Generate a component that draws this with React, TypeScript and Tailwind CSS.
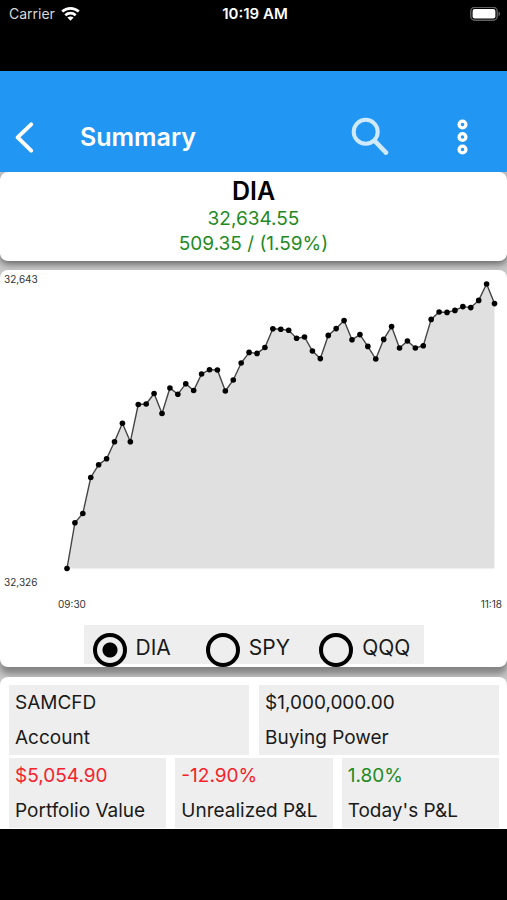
import React, { useState } from 'react';

const symbols = ['DIA', 'SPY', 'QQQ'];

const topTiles = [
  { value: 'SAMCFD', label: 'Account', color: 'text-[#1a1a1a]' },
  { value: '$1,000,000.00', label: 'Buying Power', color: 'text-[#1a1a1a]' },
];

const bottomTiles = [
  { value: '$5,054.90', label: 'Portfolio Value', color: 'text-[#f5222a]' },
  { value: '-12.90%', label: 'Unrealized P&L', color: 'text-[#f5222a]' },
  { value: '1.80%', label: "Today's P&L", color: 'text-[#1f8a24]' },
];

// heights of the price points inside the plot, measured from its top edge
const prices = [
  288.5, 242.7, 233.5, 197.5, 184.7, 178.8, 161.8, 143.3, 161.8, 124.5, 124, 113.5, 133.5, 108, 114.3,
  103.7, 110.5, 94, 89.7, 90, 111, 100, 83, 72.4, 73.4, 67.5, 48.8, 49.3, 50.3, 58.3, 57, 71, 78.6, 55.4,
  48.6, 40.6, 59.7, 54.6, 66.4, 79, 59.4, 46.6, 68, 61, 68, 65.7, 39.4, 32, 32.4, 30.4, 26.6, 27.6, 20.4,
  4, 23.6,
];

const points = prices.map((y, i) => ({ x: 7 + i * 7.917, y }));
const line = points.map((p) => `${p.x},${p.y}`).join(' ');

const StatusBar: React.FC = () => (
  <div className="grid grid-cols-3 items-center h-[71px] pb-[43px] pl-[9px] pr-[6px] text-white text-sm leading-5">
    <div className="flex items-center gap-[6px] text-[#d8d8d8]">
      <span>Carrier</span>
      <svg width="19" height="15" viewBox="0 0 19 15" aria-hidden="true">
        <g fill="none" stroke="#fff" strokeWidth="2.7">
          <path d="M1.2 4.6C6 0.3 13 0.3 17.8 4.6" />
          <path d="M4.3 8.3C7.3 5.5 11.7 5.5 14.7 8.3" />
        </g>
        <path d="M9.5 13.8L6.4 10.6C8.2 9 10.8 9 12.6 10.6Z" fill="#fff" />
      </svg>
    </div>
    <span className="text-center text-[15px] font-semibold whitespace-nowrap">10:19 AM</span>
    <svg className="justify-self-end" width="31" height="15" viewBox="0 0 31 15" aria-hidden="true">
      <rect x="0.8" y="0.3" width="26.4" height="13" rx="4" fill="none" stroke="#636363" strokeWidth="1.4" />
      <rect x="2.6" y="2.1" width="22.8" height="9.4" rx="2" fill="#fff" />
      <path d="M28.6 4.5C30.4 5.3 30.4 8.5 28.6 9.3Z" fill="#777" />
    </svg>
  </div>
);

const Header: React.FC = () => (
  <header className="flex items-end h-[101px] pb-[14px] pl-3 pr-[32px] bg-[#2196f3] text-white">
    <button aria-label="Back" className="w-[68px] h-[42px]">
      <svg width="26" height="42" viewBox="0 0 26 42">
        <path d="M19.2 8.4L5.6 21.4L19.2 34.6" fill="none" stroke="#fff" strokeWidth="4" strokeLinecap="round" strokeLinejoin="round" />
      </svg>
    </button>
    <h1 className="flex-1 text-[25px] leading-[42px] font-semibold">Summary</h1>
    <button aria-label="Search" className="w-10 h-[42px] mr-[62px]">
      <svg width="40" height="42" viewBox="0 0 40 42" fill="none" stroke="#d0e9fd">
        <circle cx="16.7" cy="15.8" r="12" strokeWidth="4" />
        <path d="M26.4 25.6L37 36.6" strokeWidth="4.6" strokeLinecap="round" />
      </svg>
    </button>
    <button aria-label="More" className="w-6 h-[42px]">
      <svg width="24" height="42" viewBox="0 0 24 42" fill="none" stroke="#fff" strokeWidth="3.3">
        <circle cx="11.5" cy="8.5" r="3.4" />
        <circle cx="11.5" cy="21" r="3.4" />
        <circle cx="11.5" cy="33.5" r="3.4" />
      </svg>
    </button>
  </header>
);

const Chart: React.FC = () => (
  <div>
    <div className="flex text-[10px] leading-4 text-[#333]">
      <div className="flex flex-col justify-between w-[60px] pl-1 pt-px pb-[2px]">
        <span>32,643</span>
        <span>32,326</span>
      </div>
      <div className="flex-1 pt-[10px] pb-5 pr-[7px]">
        <svg className="w-full h-auto" viewBox="0 0 440 292" role="img" aria-label="DIA price">
          <polygon points={`7,288.5 ${line} 434.5,288.5`} fill="#e0e0e0" />
          <polyline points={line} fill="none" stroke="#444" strokeWidth="1.4" />
          {points.map((p, index) => (
            <circle key={index} cx={p.x} cy={p.y} r="2.8" fill="#000" />
          ))}
        </svg>
      </div>
    </div>
    <div className="flex justify-between pl-[58px] pr-[5px] pt-1 text-[10px] leading-4 text-[#333]">
      <span>09:30</span>
      <span>11:18</span>
    </div>
  </div>
);

const Tile: React.FC<{ value: string; label: string; color: string }> = ({ value, label, color }) => (
  <div className="flex-1 h-[70px] pl-[6px] pt-[6px] bg-[#eee] text-[19px] leading-6 whitespace-nowrap">
    <div className={color}>{value}</div>
    <div className="mt-[11px] text-[#1a1a1a]">{label}</div>
  </div>
);

const App: React.FC = () => {
  const [symbol, setSymbol] = useState('DIA');

  return (
    <div className="min-h-screen bg-black font-['Inter','Liberation_Sans',sans-serif]">
      <StatusBar />
      <Header />
      <main className="bg-[#c8c8c8] overflow-hidden">
        <section className="h-[89px] pt-1 rounded-lg bg-white text-center shadow-[0_3px_7px_rgba(0,0,0,0.5)]">
          <h2 className="text-[25px] leading-[30px] font-semibold text-black">DIA</h2>
          <p className="text-[19px] leading-[25px] text-[#1f8a24]">32,634.55</p>
          <p className="text-[19px] leading-[25px] text-[#1f8a24]">509.35 / (1.59%)</p>
        </section>

        <section className="mt-[9px] pb-[3px] rounded-lg bg-white shadow-[0_7px_7px_rgba(0,0,0,0.35)]">
          <Chart />
          <div className="flex w-[340px] h-[39px] mt-[13px] mx-auto bg-[#eee]" role="radiogroup" aria-label="Symbol">
            {symbols.map((name) => (
              <label key={name} className="flex flex-1 gap-[9px] pl-[9px] text-[21px] leading-6 text-[#1a1a1a]">
                <input
                  type="radio"
                  name="symbol"
                  value={name}
                  checked={symbol === name}
                  onChange={() => setSymbol(name)}
                  className="appearance-none shrink-0 size-[34px] mt-2 rounded-full border-4 border-black checked:bg-[radial-gradient(circle,#000_7px,transparent_8px)]"
                />
                <span className="pt-[11px]">{name}</span>
              </label>
            ))}
          </div>
        </section>

        <section className="mt-[10px] pl-[9px] pr-2 pt-2 pb-px rounded-t-lg bg-white">
          <div className="flex gap-[10px]">
            {topTiles.map((tile) => (
              <Tile key={tile.label} {...tile} />
            ))}
          </div>
          <div className="flex gap-[9px] mt-[3px]">
            {bottomTiles.map((tile) => (
              <Tile key={tile.label} {...tile} />
            ))}
          </div>
        </section>
      </main>
    </div>
  );
};

export default App;
